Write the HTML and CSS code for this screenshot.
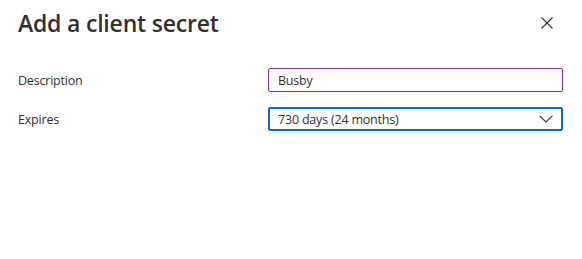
FILE: index.html
```html
<!DOCTYPE html>
<html lang="en">
<head>
<meta charset="utf-8">
<title>Add a client secret</title>
<link rel="stylesheet" href="styles.css">
</head>
<body>
<div class="panel">
  <header class="header">
    <h1 class="title">Add a client secret</h1>
    <button class="close" aria-label="Close">
      <svg width="12" height="12" viewBox="0 0 12 12"><path d="M0.5 0.5 L11.5 11.5 M11.5 0.5 L0.5 11.5" stroke="#323130" stroke-width="1.1" fill="none"/></svg>
    </button>
  </header>
  <div class="form">
    <div class="row">
      <label class="label">Description</label>
      <div class="field input-dirty">Busby</div>
    </div>
    <div class="row">
      <label class="label">Expires</label>
      <div class="field select-focus">
        <span>730 days (24 months)</span>
        <svg class="chev" width="14" height="8" viewBox="0 0 14 8"><path d="M0.6 0.8 L7 7 L13.4 0.8" stroke="#323130" stroke-width="1.1" fill="none"/></svg>
      </div>
    </div>
  </div>
</div>
</body>
</html>
```
FILE: styles.css
```css
html, body {
  margin: 0;
  padding: 0;
  background: #ffffff;
}
body {
  font-family: "Open Sans", "Noto Sans", sans-serif;
  color: #323130;
}
.panel {
  width: 582px;
  height: 259px;
  box-sizing: border-box;
  padding: 0 19px 0 18px;
}
.header {
  display: flex;
  align-items: center;
  justify-content: space-between;
  height: 46px;
}
.title {
  margin: 0;
  font-size: 23px;
  font-weight: 600;
  letter-spacing: -0.2px;
  color: #323130;
}
.close {
  border: 0;
  background: none;
  padding: 0;
  margin-right: 10px;
  width: 12px;
  height: 12px;
  display: flex;
}
.form {
  display: flex;
  flex-direction: column;
  gap: 15px;
  padding-top: 22px;
}
.row {
  display: grid;
  grid-template-columns: 250px 1fr;
  align-items: center;
}
.label,
.field {
  font-family: "Open Sans", "Noto Sans", sans-serif;
  font-size: 12.5px;
  letter-spacing: -0.2px;
}
.field {
  box-sizing: border-box;
  height: 24px;
  display: flex;
  align-items: center;
  padding-left: 9px;
}
.input-dirty {
  border: 1px solid #8a2da5;
  border-radius: 2px;
}
.select-focus {
  border: 2px solid #0f6cbd;
  border-radius: 2px;
  padding-left: 8px;
  justify-content: space-between;
  padding-right: 8px;
}
.chev {
  display: block;
}
```
